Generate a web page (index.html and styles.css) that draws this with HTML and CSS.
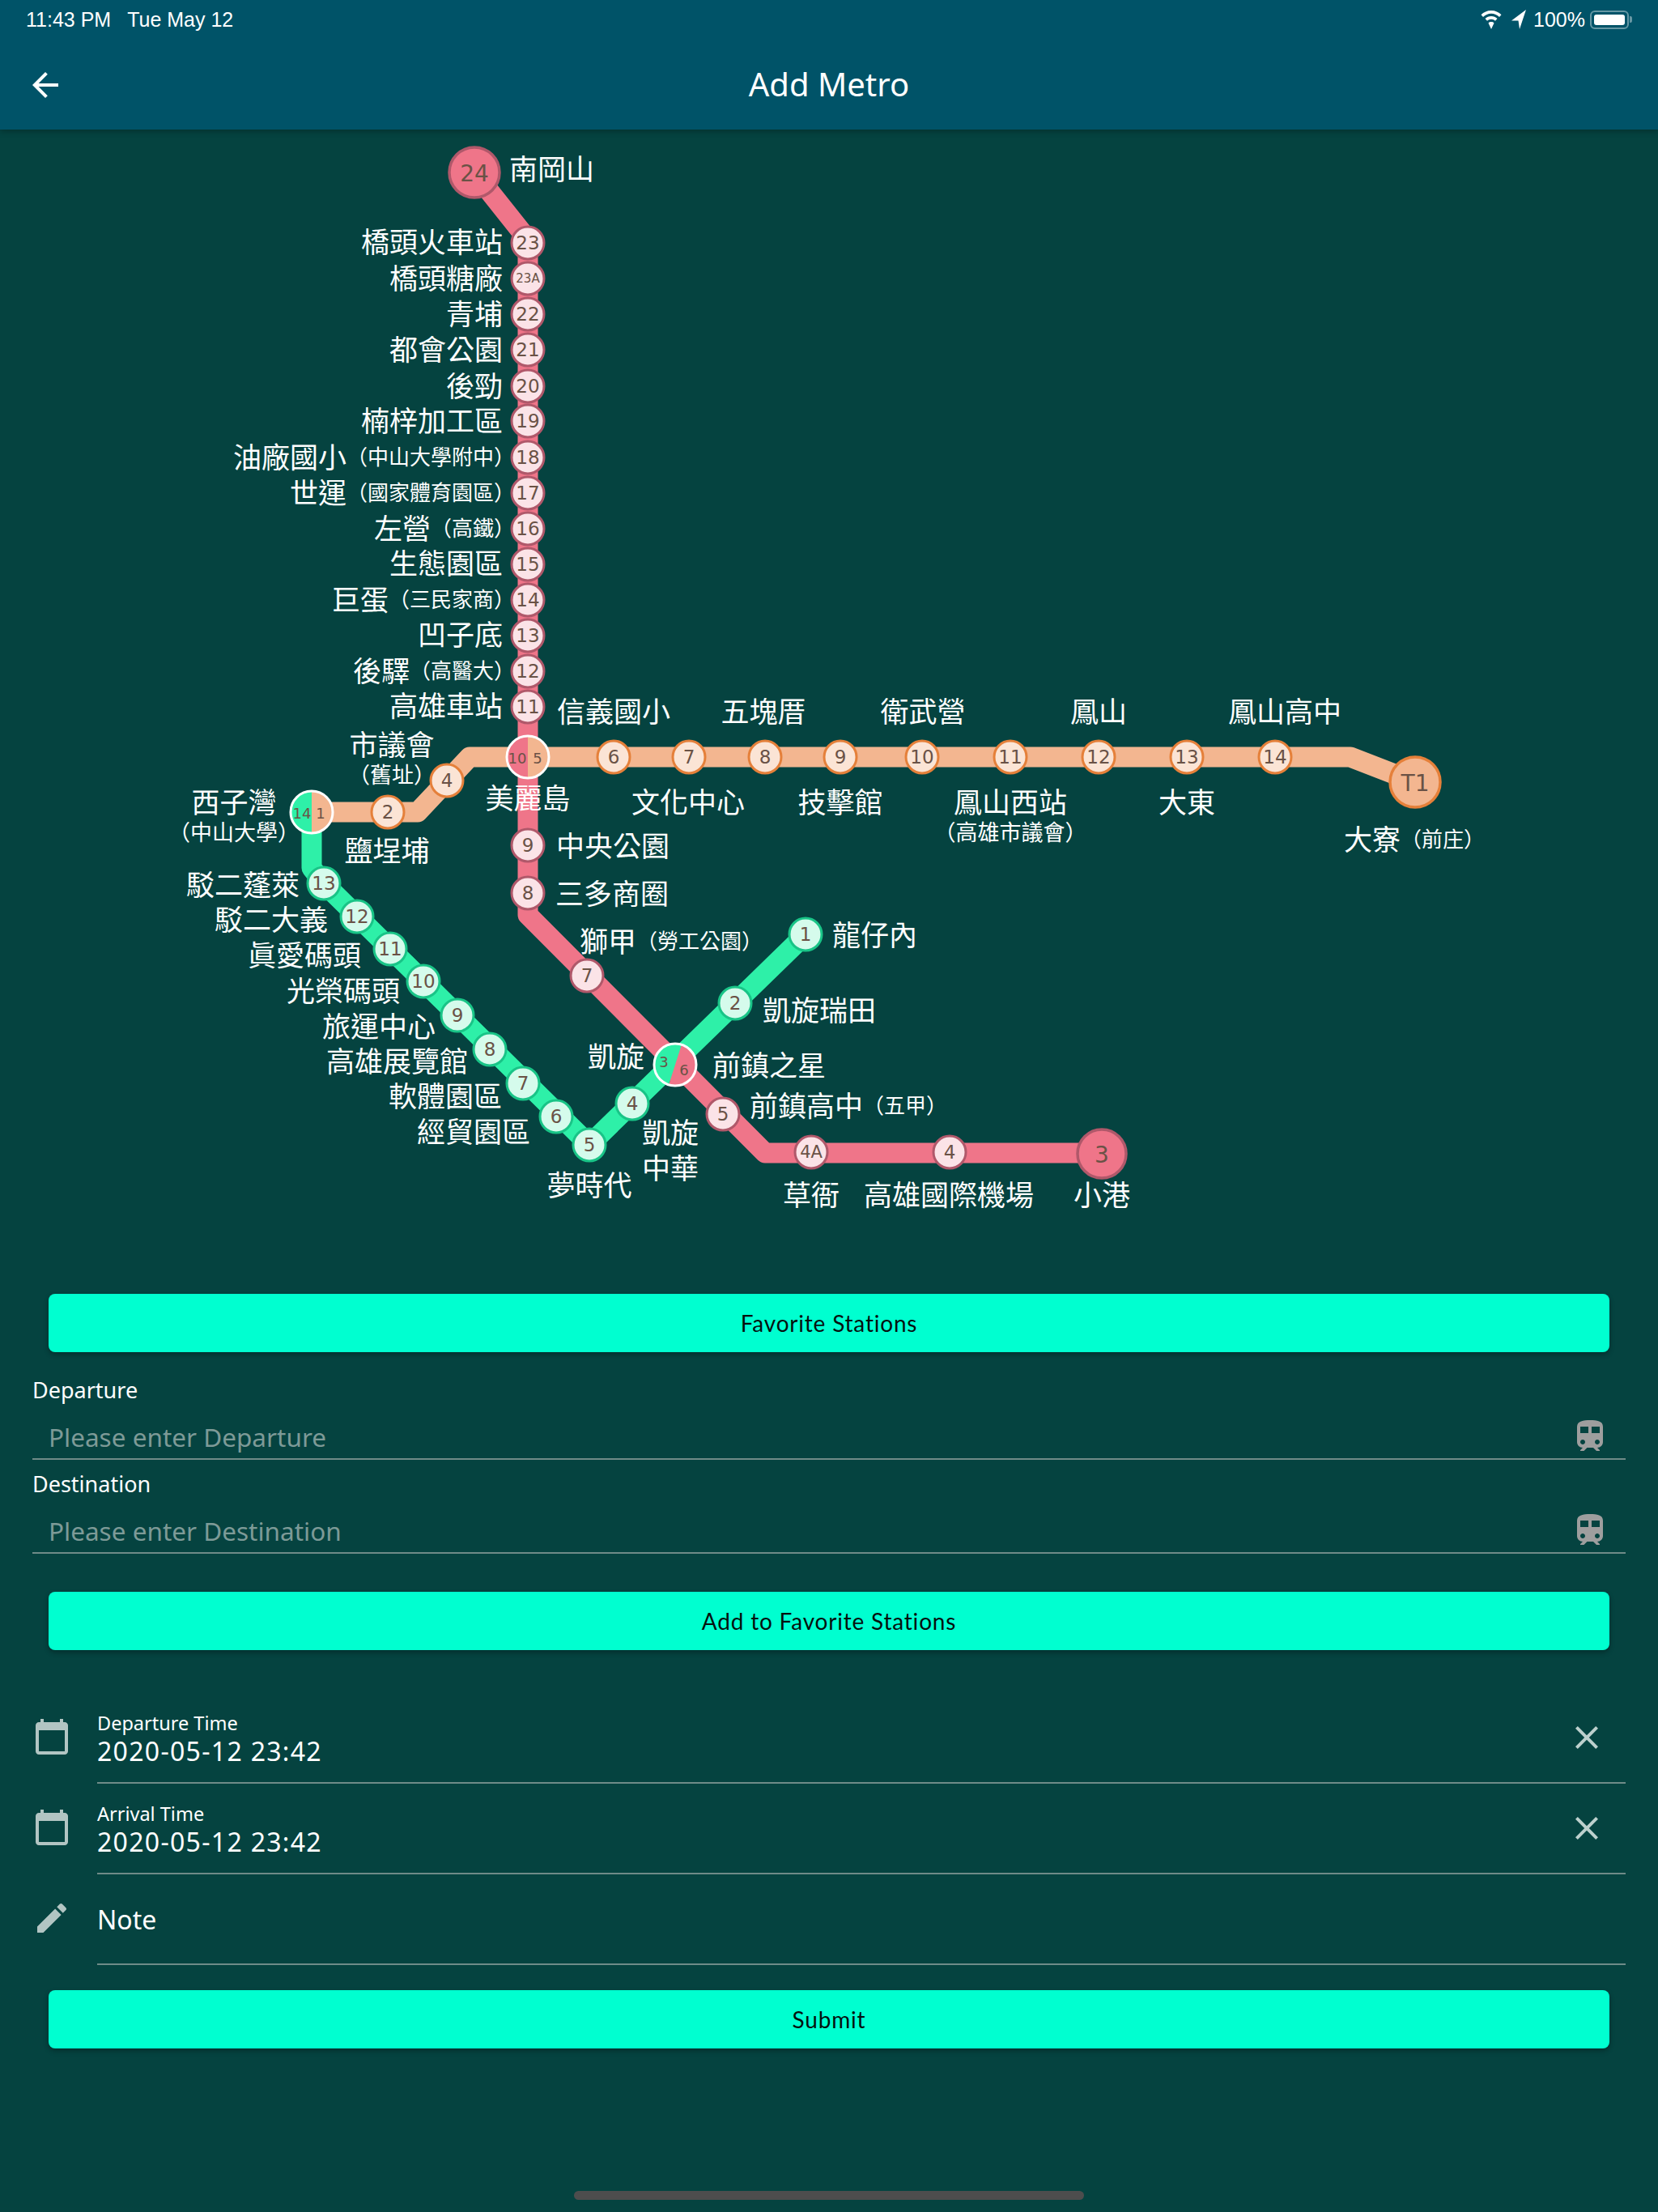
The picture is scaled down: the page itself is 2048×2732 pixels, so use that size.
FILE: index.html
```html
<!DOCTYPE html>
<html lang="zh-Hant">
<head>
  <meta charset="UTF-8" />
  <meta name="viewport" content="width=device-width, initial-scale=1.0" />
  <title>Add Metro</title>
  <link rel="stylesheet" href="styles.css">
</head>
<body>
  <div class="page">
    <header class="top-bar">
      <div class="status-bar">
        <div class="status-time"><span>11:43 PM</span><span>Tue May 12</span></div>
        <div class="status-right">
          <svg class="wifi" viewBox="0 0 28 26"><path d="M14 2C9 2 4.700 4 1.500 7.200L4 10c2.600-2.600 6.100-4.200 10-4.200S21.400 7.400 24 10l2.500-2.800C23.300 4 19 2 14 2z"/><path d="M14 9c-3 0-5.500 1.200-7.500 3.100L9 14.800c1.300-1.300 3-2 5-2s3.700.7 5 2l2.500-2.700C19.500 10.200 17 9 14 9z"/><path d="M14 16c-1.400 0-2.600.5-3.500 1.400L14 25l3.500-7.600C16.600 16.500 15.400 16 14 16z"/></svg>
          <svg class="arrow" viewBox="0 0 20 26"><path d="M19 1 1 14.500h8.500L11 25z"/></svg>
          <span class="status-pct">100%</span>
          <div class="battery"><div class="battery-fill"></div></div>
          <div class="battery-nub"></div>
        </div>
      </div>
      <div class="app-bar">
        <svg class="back-icon" viewBox="0 0 24 24"><path d="M20 11H7.830l5.590-5.590L12 4l-8 8 8 8 1.410-1.410L7.830 13H20v-2z"/></svg>
        <h1>Add Metro</h1>
      </div>
    </header>

    <svg class="map" viewBox="0 160 2048 1438">
      <!-- lines -->
      <path class="line line-red" d="M586 213 652 296V1130L945 1424H1361"/>
      <path class="line line-orange" d="M385 1003H516L580 935H1668L1748 966"/>
      <path class="line line-green" d="M385 1003V1072L400 1091 728 1414 995 1154"/>

      <!-- red stations -->
      <circle class="end-st red" cx="586" cy="213" r="31"/><text class="num big" x="586" y="214">24</text>
      <g class="st red">
        <circle cx="652" cy="300" r="20"/><circle cx="652" cy="344" r="20"/><circle cx="652" cy="388" r="20"/>
        <circle cx="652" cy="432" r="20"/><circle cx="652" cy="477" r="20"/><circle cx="652" cy="520" r="20"/>
        <circle cx="652" cy="565" r="20"/><circle cx="652" cy="609" r="20"/><circle cx="652" cy="653" r="20"/>
        <circle cx="652" cy="697" r="20"/><circle cx="652" cy="741" r="20"/><circle cx="652" cy="785" r="20"/>
        <circle cx="652" cy="829" r="20"/><circle cx="652" cy="873" r="20"/><circle cx="652" cy="1044" r="20"/>
        <circle cx="652" cy="1103" r="20"/><circle cx="725" cy="1205" r="20"/><circle cx="893" cy="1376" r="20"/>
        <circle cx="1002" cy="1423" r="20"/><circle cx="1173" cy="1423" r="20"/>
      </g>
      <text class="num" x="652" y="300">23</text><text class="num tiny" x="652" y="344">23A</text>
      <text class="num" x="652" y="388">22</text><text class="num" x="652" y="432">21</text>
      <text class="num" x="652" y="477">20</text><text class="num" x="652" y="520">19</text>
      <text class="num" x="652" y="565">18</text><text class="num" x="652" y="609">17</text>
      <text class="num" x="652" y="653">16</text><text class="num" x="652" y="697">15</text>
      <text class="num" x="652" y="741">14</text><text class="num" x="652" y="785">13</text>
      <text class="num" x="652" y="829">12</text><text class="num" x="652" y="873">11</text>
      <text class="num" x="652" y="1044">9</text><text class="num" x="652" y="1103">8</text>
      <text class="num" x="725" y="1205">7</text><text class="num" x="893" y="1376">5</text>
      <text class="num small" x="1002" y="1423">4A</text><text class="num" x="1173" y="1423">4</text>
      <circle class="end-st red" cx="1361" cy="1425" r="30"/><text class="num big" x="1361" y="1426">3</text>

      <!-- orange stations -->
      <g class="st orange">
        <circle cx="479" cy="1003" r="20"/><circle cx="552" cy="964" r="20"/><circle cx="758" cy="935" r="20"/>
        <circle cx="851" cy="935" r="20"/><circle cx="945" cy="935" r="20"/><circle cx="1038" cy="935" r="20"/>
        <circle cx="1139" cy="935" r="20"/><circle cx="1248" cy="935" r="20"/><circle cx="1357" cy="935" r="20"/>
        <circle cx="1466" cy="935" r="20"/><circle cx="1575" cy="935" r="20"/>
      </g>
      <text class="num" x="479" y="1003">2</text><text class="num" x="552" y="964">4</text>
      <text class="num" x="758" y="935">6</text><text class="num" x="851" y="935">7</text>
      <text class="num" x="945" y="935">8</text><text class="num" x="1038" y="935">9</text>
      <text class="num" x="1139" y="935">10</text><text class="num" x="1248" y="935">11</text>
      <text class="num" x="1357" y="935">12</text><text class="num" x="1466" y="935">13</text>
      <text class="num" x="1575" y="935">14</text>
      <circle class="end-st orange" cx="1748" cy="966" r="31"/><text class="num big" x="1748" y="967">T1</text>

      <!-- green stations -->
      <g class="st green">
        <circle cx="400" cy="1091" r="20"/><circle cx="441" cy="1132" r="20"/><circle cx="482" cy="1172" r="20"/>
        <circle cx="523" cy="1212" r="20"/><circle cx="565" cy="1254" r="20"/><circle cx="605" cy="1296" r="20"/>
        <circle cx="646" cy="1338" r="20"/><circle cx="687" cy="1379" r="20"/><circle cx="728" cy="1414" r="20"/>
        <circle cx="781" cy="1363" r="20"/><circle cx="908" cy="1239" r="20"/><circle cx="995" cy="1154" r="20"/>
      </g>
      <text class="num" x="400" y="1091">13</text><text class="num" x="441" y="1132">12</text>
      <text class="num" x="482" y="1172">11</text><text class="num" x="523" y="1212">10</text>
      <text class="num" x="565" y="1254">9</text><text class="num" x="605" y="1296">8</text>
      <text class="num" x="646" y="1338">7</text><text class="num" x="687" y="1379">6</text>
      <text class="num" x="728" y="1414">5</text><text class="num" x="781" y="1363">4</text>
      <text class="num" x="908" y="1239">2</text><text class="num" x="995" y="1154">1</text>

      <!-- interchanges -->
      <path class="fill-red" d="M652 909A26 26 0 0 0 652 961Z"/><path class="fill-orange" d="M652 909A26 26 0 0 1 652 961Z"/>
      <circle class="ring" cx="652" cy="935" r="26"/>
      <text class="num mini" x="639" y="936">10</text><text class="num mini" x="664" y="936">5</text>
      <path class="fill-green" d="M385 977A26 26 0 0 0 385 1029Z"/><path class="fill-orange" d="M385 977A26 26 0 0 1 385 1029Z"/>
      <circle class="ring" cx="385" cy="1003" r="26"/>
      <text class="num mini" x="373" y="1004">14</text><text class="num mini" x="396" y="1004">1</text>
      <path class="fill-green" d="M842 1290A26 26 0 0 0 826 1340Z"/><path class="fill-red" d="M842 1290A26 26 0 0 1 826 1340Z"/>
      <circle class="ring" cx="834" cy="1315" r="26"/>
      <text class="num mini" x="820" y="1311">3</text><text class="num mini" x="845" y="1321">6</text>

      <!-- station names, red line -->
      <text class="name" x="629" y="208">南岡山</text>
      <text class="name to-left" x="621" y="298">橋頭火車站</text>
      <text class="name to-left" x="621" y="343">橋頭糖廠</text>
      <text class="name to-left" x="621" y="387">青埔</text>
      <text class="name to-left" x="621" y="431">都會公園</text>
      <text class="name to-left" x="621" y="476">後勁</text>
      <text class="name to-left" x="621" y="519">楠梓加工區</text>
      <text class="name to-left" x="636" y="564">油廠國小<tspan class="sub">（中山大學附中）</tspan></text>
      <text class="name to-left" x="636" y="608">世運<tspan class="sub">（國家體育園區）</tspan></text>
      <text class="name to-left" x="636" y="652">左營<tspan class="sub">（高鐵）</tspan></text>
      <text class="name to-left" x="621" y="695">生態園區</text>
      <text class="name to-left" x="636" y="740">巨蛋<tspan class="sub">（三民家商）</tspan></text>
      <text class="name to-left" x="621" y="783">凹子底</text>
      <text class="name to-left" x="636" y="828">後驛<tspan class="sub">（高醫大）</tspan></text>
      <text class="name to-left" x="621" y="871">高雄車站</text>
      <text class="name mid" x="652" y="985">美麗島</text>
      <text class="name" x="687" y="1044">中央公園</text>
      <text class="name" x="686" y="1103">三多商圈</text>
      <text class="name" x="716" y="1162">獅甲<tspan class="sub">（勞工公園）</tspan></text>
      <text class="name" x="880" y="1315">前鎮之星</text>
      <text class="name" x="926" y="1365">前鎮高中<tspan class="sub">（五甲）</tspan></text>
      <text class="name mid" x="1002" y="1475">草衙</text>
      <text class="name mid" x="1172" y="1475">高雄國際機場</text>
      <text class="name mid" x="1361" y="1475">小港</text>

      <!-- station names, orange line -->
      <text class="name mid" x="484" y="919">市議會</text>
      <text class="name mid sub wide" x="484" y="957">（舊址）</text>
      <text class="name mid" x="289" y="990">西子灣</text>
      <text class="name mid sub wide" x="289" y="1028">（中山大學）</text>
      <text class="name mid" x="478" y="1050">鹽埕埔</text>
      <text class="name mid" x="758" y="878">信義國小</text>
      <text class="name mid" x="943" y="878">五塊厝</text>
      <text class="name mid" x="1140" y="878">衛武營</text>
      <text class="name mid" x="1357" y="878">鳳山</text>
      <text class="name mid" x="1587" y="878">鳳山高中</text>
      <text class="name mid" x="850" y="990">文化中心</text>
      <text class="name mid" x="1038" y="990">技擊館</text>
      <text class="name mid" x="1248" y="990">鳳山西站</text>
      <text class="name mid sub wide" x="1248" y="1028">（高雄市議會）</text>
      <text class="name mid" x="1466" y="990">大東</text>
      <text class="name" x="1660" y="1036">大寮<tspan class="sub">（前庄）</tspan></text>

      <!-- station names, green line -->
      <text class="name" x="1028" y="1154">龍仔內</text>
      <text class="name" x="942" y="1247">凱旋瑞田</text>
      <text class="name to-left" x="796" y="1304">凱旋</text>
      <text class="name mid" x="828" y="1398">凱旋</text>
      <text class="name mid" x="828" y="1442">中華</text>
      <text class="name mid" x="728" y="1463">夢時代</text>
      <text class="name to-left" x="370" y="1092">駁二蓬萊</text>
      <text class="name to-left" x="405" y="1135">駁二大義</text>
      <text class="name to-left" x="446" y="1179">眞愛碼頭</text>
      <text class="name to-left" x="494" y="1223">光榮碼頭</text>
      <text class="name to-left" x="538" y="1267">旅運中心</text>
      <text class="name to-left" x="578" y="1310">高雄展覽館</text>
      <text class="name to-left" x="620" y="1353">軟體園區</text>
      <text class="name to-left" x="655" y="1397">經貿園區</text>
    </svg>

    <main class="form">
      <button class="action-btn" type="button">Favorite Stations</button>

      <div class="field first-field">
        <label>Departure</label>
        <div class="field-input">
          <span class="placeholder">Please enter Departure</span>
          <svg class="train-icon" viewBox="4 2 16 19"><path d="M12 2c-4 0-8 .5-8 4v9.500C4 17.430 5.570 19 7.500 19L6 20.500v.5h2.230l2-2H14l2 2h2v-.5L16.500 19c1.930 0 3.500-1.570 3.500-3.500V6c0-3.500-3.580-4-8-4zM7.500 17c-.83 0-1.500-.67-1.500-1.500S6.670 14 7.500 14s1.500.67 1.500 1.500S8.330 17 7.500 17zm3.500-7H6V6h5v4zm2 0V6h5v4h-5zm3.500 7c-.83 0-1.500-.67-1.500-1.500s.67-1.500 1.500-1.500 1.500.67 1.500 1.500-.67 1.500-1.500 1.500z"/></svg>
        </div>
      </div>
      <div class="field">
        <label>Destination</label>
        <div class="field-input">
          <span class="placeholder">Please enter Destination</span>
          <svg class="train-icon" viewBox="4 2 16 19"><path d="M12 2c-4 0-8 .5-8 4v9.500C4 17.430 5.570 19 7.500 19L6 20.500v.5h2.230l2-2H14l2 2h2v-.5L16.500 19c1.930 0 3.500-1.570 3.500-3.500V6c0-3.500-3.580-4-8-4zM7.500 17c-.83 0-1.500-.67-1.500-1.500S6.670 14 7.500 14s1.500.67 1.500 1.500S8.330 17 7.500 17zm3.500-7H6V6h5v4zm2 0V6h5v4h-5zm3.500 7c-.83 0-1.500-.67-1.500-1.500s.67-1.500 1.500-1.500 1.500.67 1.500 1.500-.67 1.500-1.500 1.500z"/></svg>
        </div>
      </div>

      <button class="action-btn add-btn" type="button">Add to Favorite Stations</button>

      <div class="rows">
        <div class="row">
          <svg class="row-icon" viewBox="0 0 24 24"><path d="M20 3h-1V1h-2v2H7V1H5v2H4c-1.100 0-2 .9-2 2v16c0 1.100.9 2 2 2h16c1.100 0 2-.9 2-2V5c0-1.100-.9-2-2-2zm0 18H4V8h16v13z"/></svg>
          <div class="row-body">
            <div class="row-label">Departure Time</div>
            <div class="row-value">2020-05-12 23:42</div>
            <svg class="clear-icon" viewBox="0 0 24 24"><path d="M19 6.410 17.590 5 12 10.590 6.410 5 5 6.410 10.590 12 5 17.590 6.410 19 12 13.410 17.590 19 19 17.590 13.410 12z"/></svg>
          </div>
        </div>
        <div class="row">
          <svg class="row-icon" viewBox="0 0 24 24"><path d="M20 3h-1V1h-2v2H7V1H5v2H4c-1.100 0-2 .9-2 2v16c0 1.100.9 2 2 2h16c1.100 0 2-.9 2-2V5c0-1.100-.9-2-2-2zm0 18H4V8h16v13z"/></svg>
          <div class="row-body">
            <div class="row-label">Arrival Time</div>
            <div class="row-value">2020-05-12 23:42</div>
            <svg class="clear-icon" viewBox="0 0 24 24"><path d="M19 6.410 17.590 5 12 10.590 6.410 5 5 6.410 10.590 12 5 17.590 6.410 19 12 13.410 17.590 19 19 17.590 13.410 12z"/></svg>
          </div>
        </div>
        <div class="row note-row">
          <svg class="row-icon" viewBox="0 0 24 24"><path d="M3 17.250V21h3.750L17.810 9.940l-3.750-3.750L3 17.250zM20.710 7.040c.39-.39.39-1.020 0-1.410l-2.340-2.340c-.39-.39-1.020-.39-1.410 0l-1.830 1.830 3.750 3.750 1.830-1.830z"/></svg>
          <div class="row-body">
            <div class="row-note">Note</div>
          </div>
        </div>
      </div>

      <button class="action-btn submit-btn" type="button">Submit</button>
    </main>

    <div class="home-bar"></div>
  </div>
</body>
</html>
```
FILE: styles.css
```css
* {
  box-sizing: border-box;
}
body {
  margin: 0;
  background: #054340;
  font-family: "Noto Sans", "Noto Sans CJK TC", sans-serif;
}
.page {
  width: 2048px;
  height: 2732px;
  position: relative;
  overflow: hidden;
  background: #054340;
}

/* top */
.top-bar {
  height: 160px;
  background: #005368;
  box-shadow: 0 2px 8px rgba(0, 0, 0, 0.3);
  position: relative;
  color: white;
}
.status-bar {
  height: 48px;
  padding: 0 32px;
  display: flex;
  justify-content: space-between;
  align-items: center;
  font-family: "Liberation Sans", sans-serif;
  font-size: 25px;
}
.status-time {
  display: flex;
  gap: 20px;
}
.status-right {
  display: flex;
  align-items: center;
}
.wifi {
  width: 28px;
  height: 26px;
  fill: white;
}
.arrow {
  width: 20px;
  height: 26px;
  fill: white;
  margin-left: 10px;
}
.status-pct {
  margin-left: 8px;
}
.battery {
  width: 48px;
  height: 23px;
  margin-left: 6px;
  padding: 3px;
  border: 2px solid rgba(255, 255, 255, 0.4);
  border-radius: 6px;
}
.battery-fill {
  height: 100%;
  background: white;
  border-radius: 3px;
}
.battery-nub {
  width: 3px;
  height: 8px;
  margin-left: 1px;
  background: rgba(255, 255, 255, 0.4);
  border-radius: 0 2px 2px 0;
}
.app-bar {
  height: 112px;
  position: relative;
  display: flex;
  align-items: center;
  justify-content: center;
}
.app-bar h1 {
  margin: 0 0 2px;
  font-size: 40px;
  font-weight: 400;
}
.back-icon {
  position: absolute;
  left: 32px;
  top: 33px;
  width: 48px;
  height: 48px;
  fill: white;
}

/* map */
.map {
  display: block;
  width: 2048px;
  height: 1438px;
}
.line {
  fill: none;
  stroke-width: 25;
  stroke-linejoin: round;
}
.line-red {
  stroke: #ef7589;
}
.line-orange {
  stroke: #f3b690;
}
.line-green {
  stroke: #2ef0a8;
}
.st circle {
  stroke-width: 3;
}
.st.red circle {
  fill: #fbe3e7;
  stroke: #b0586a;
}
.st.orange circle {
  fill: #fbe4d5;
  stroke: #e5803a;
}
.st.green circle {
  fill: #d5fbec;
  stroke: #19c487;
}
.end-st {
  stroke-width: 3.5;
}
.end-st.red {
  fill: #ef7589;
  stroke: #b0586a;
}
.end-st.orange {
  fill: #f3b690;
  stroke: #e5803a;
}
.fill-red {
  fill: #ef7589;
}
.fill-orange {
  fill: #f3b690;
}
.fill-green {
  fill: #2ef0a8;
}
.ring {
  fill: none;
  stroke: white;
  stroke-width: 3;
}
.num {
  fill: #6a5246;
  font-family: "DejaVu Sans", sans-serif;
  font-size: 23px;
  text-anchor: middle;
  dominant-baseline: central;
}
.num.big {
  font-size: 28px;
}
.num.small {
  font-size: 21px;
}
.num.tiny {
  font-size: 15px;
}
.num.mini {
  font-size: 18px;
}
.name {
  fill: white;
  font-family: "Noto Sans CJK TC", sans-serif;
  font-size: 35px;
  dominant-baseline: central;
  transform: translateY(-2px);
}
.name.to-left {
  text-anchor: end;
}
.name.mid {
  text-anchor: middle;
}
.sub {
  font-size: 26px;
}
.name.sub {
  font-size: 26px;
}
.name.sub.wide {
  font-size: 27px;
}

/* form */
.form {
  padding: 0 40px;
}
.action-btn {
  display: block;
  width: 1928px;
  height: 72px;
  margin: 0 20px;
  padding: 0;
  border: none;
  border-radius: 8px;
  background: #00ffd0;
  color: #06110f;
  box-shadow: 0 3px 6px rgba(0, 0, 0, 0.3);
  font-family: "Lato", sans-serif;
  font-size: 28px;
  letter-spacing: 0.8px;
}
.first-field {
  margin-top: 29px;
}
.field {
  margin-bottom: 12px;
  color: white;
}
.field label {
  display: block;
  height: 36px;
  line-height: 36px;
  font-size: 27px;
}
.field-input {
  height: 68px;
  padding: 12px 0 0 20px;
  display: flex;
  align-items: center;
  justify-content: space-between;
  border-bottom: 2px solid #6f8b88;
}
.placeholder {
  color: #7d9a97;
  font-size: 31.5px;
}
.train-icon {
  width: 32px;
  height: 38px;
  margin: 0 28px 2px 0;
  fill: #9e9e9e;
}
.add-btn {
  margin-top: 47px;
}
.rows {
  margin-top: 53px;
}
.row {
  display: flex;
  height: 112px;
}
.row-icon {
  width: 48px;
  height: 48px;
  margin-top: 30px;
  fill: #b2c5c3;
  flex-shrink: 0;
}
.row-body {
  flex: 1;
  margin-left: 32px;
  position: relative;
  border-bottom: 2px solid #6f8b88;
  color: white;
}
.row-label {
  height: 30px;
  margin-top: 22px;
  line-height: 30px;
  font-size: 23.5px;
}
.row-value {
  height: 40px;
  line-height: 40px;
  font-size: 32px;
  letter-spacing: 1.3px;
}
.row-note {
  height: 40px;
  margin-top: 36px;
  line-height: 40px;
  font-size: 32px;
}
.clear-icon {
  position: absolute;
  right: 24px;
  top: 31px;
  width: 48px;
  height: 48px;
  fill: #bdd0cd;
}
.submit-btn {
  margin-top: 31px;
}
.home-bar {
  position: absolute;
  left: 709px;
  top: 2706px;
  width: 630px;
  height: 11px;
  background: #4d4d4d;
  border-radius: 6px;
}
```
